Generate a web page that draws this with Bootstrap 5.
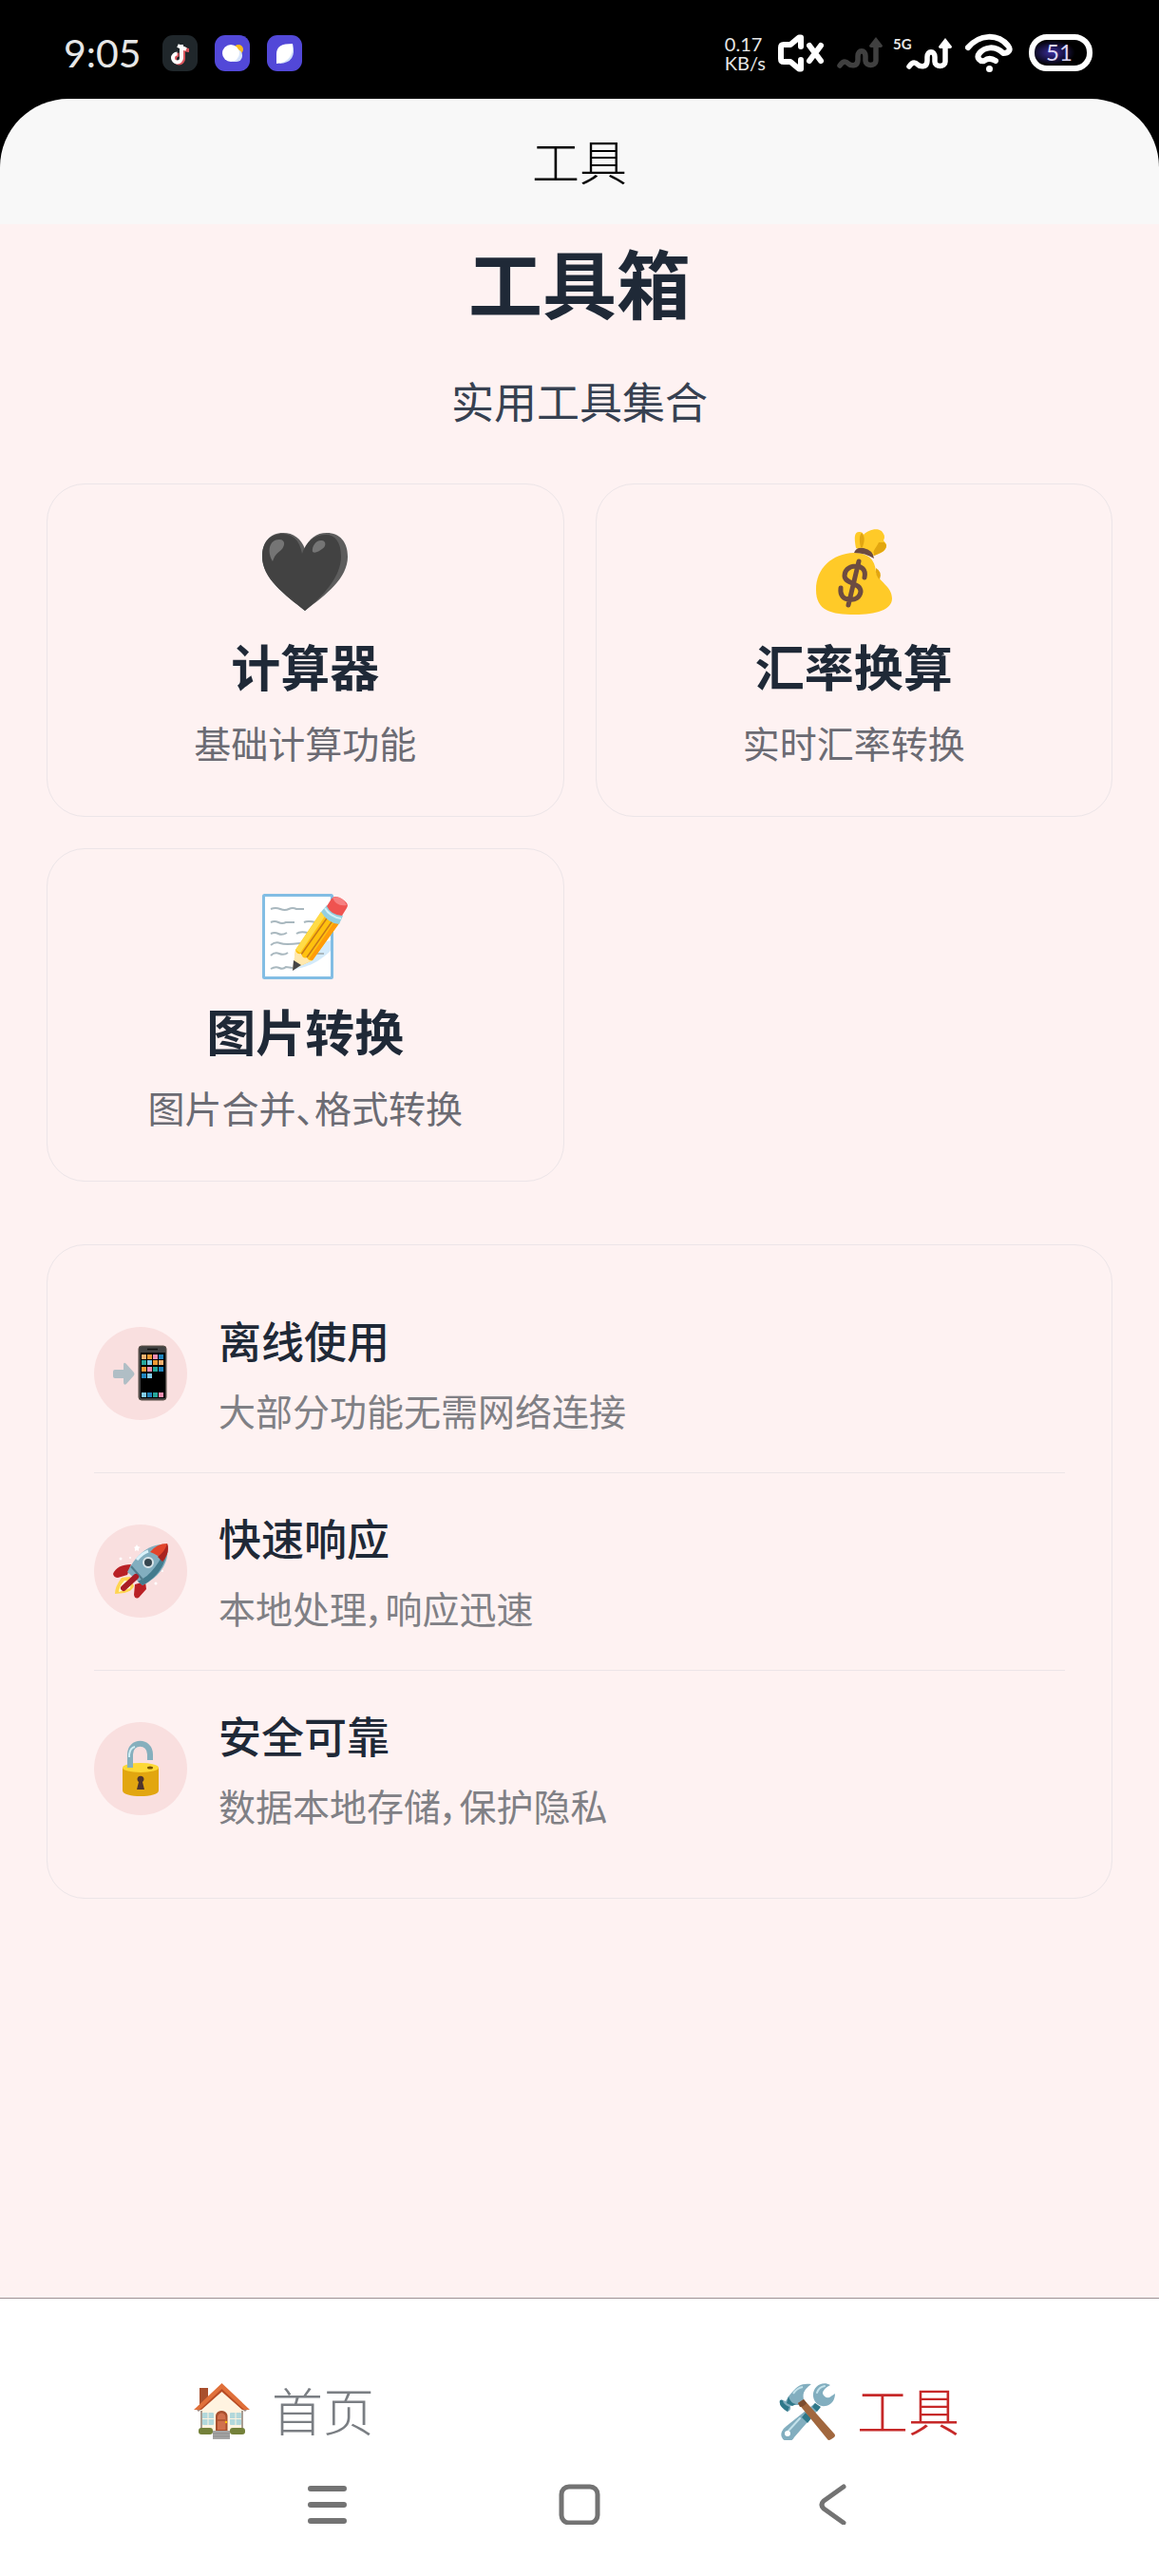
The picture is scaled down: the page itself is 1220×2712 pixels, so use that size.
<!DOCTYPE html>
<html lang="zh-CN">
<head>
<meta charset="utf-8">
<meta name="viewport" content="width=device-width, initial-scale=1">
<title>工具</title>
<link href="https://cdn.jsdelivr.net/npm/bootstrap@5.3.0/dist/css/bootstrap.min.css" rel="stylesheet">
<style>
  body { font-family: "Noto Sans CJK SC", sans-serif; background: #fef2f2; color: #1f2937; }
  svg { display: block; flex: none; }

  /* status bar */
  .statusbar { background: #000; font-family: Lato, sans-serif; color: #e6e6e6; height: 104px; padding: 8px 70px 0 67px; }
  .clock { font-size: 41px; line-height: 48px; }
  .app-icons { gap: 18px; margin-left: 22px; }
  .net-speed { font-size: 20px; line-height: 20px; }
  .status-icons { gap: 13px; }

  /* page header */
  .header-wrap { background: #000; }
  .page-header { background: #f8f8f8; border-radius: 72px 72px 0 0; height: 132px; padding-bottom: 4px; font-size: 50px; line-height: 72px; font-weight: 300; color: #000; }

  .page-main { padding: 12px 49px 48px; }
  .page-title { font-size: 78px; line-height: 96px; font-weight: 700; margin: 0; }
  .page-subtitle { font-size: 45px; line-height: 60px; color: #374151; margin: 48px 0 57px; }

  .tool-grid { --bs-gutter-x: 33px; --bs-gutter-y: 33px; }
  .tool-card, .feature-card { background: transparent; border: 1px solid #ece5e8; border-radius: 40px; }
  .tool-card { padding: 47px 24px 50px; color: #1f2937; }
  .tool-name { font-size: 52px; line-height: 72px; font-weight: 700; margin: 18px 0 16px; }
  .tool-desc { font-size: 39px; line-height: 56px; color: #6b6b73; margin: 0; }
  .tool-desc, .feature-desc { font-feature-settings: "palt"; }

  .feature-card { margin-top: 66px; padding: 32px 49px; }
  .feature-row { gap: 33px; padding: 36px 0 38px; border-bottom: 1px solid #ece5e8; }
  .feature-row:last-child { border-bottom: 0; }
  .feature-icon { width: 98px; height: 98px; background: #f9dfdf; flex: none; }
  .feature-name { font-size: 45px; line-height: 64px; font-weight: 500; margin: 0 0 13px; }
  .feature-desc { font-size: 39px; line-height: 56px; color: #808085; margin: 0; }

  .bottom-area { background: #fff; border-top: 1px solid #9c9094; padding: 80px 0 18px; }
  .tab-link { height: 78px; gap: 22px; font-size: 54px; line-height: 74px; font-weight: 300; color: #7a7e83; text-decoration: none; white-space: pre; }
  .tab-link span { padding-bottom: 4px; }
  .tab-link.active { color: #c62828; }
  .sysnav { height: 116px; gap: 178px; }
  .sysnav .btn { width: 88px; height: 88px; padding: 0; border: 0; }
</style>
</head>
<body class="d-flex flex-column min-vh-100">

<div class="statusbar d-flex justify-content-between align-items-center">
  <div class="d-flex align-items-center">
    <span class="clock">9:05</span>
    <div class="app-icons d-flex">
      <svg width="37" height="38" viewBox="0 0 37 38" aria-hidden="true"><rect width="37" height="38" rx="11" fill="#20272b"/><path d="M21 11v13a4.500 4.500 0 1 1-4.500-4.500M21 12q2 3 6 3" transform="translate(1 1)" fill="none" stroke="#d9545c" stroke-width="4"/><path d="M20 10v14a4.500 4.500 0 1 1-4.500-4.500M16 11l9 4" fill="none" stroke="#fff" stroke-width="4"/></svg>
      <svg width="37" height="38" viewBox="0 0 37 38" aria-hidden="true"><rect width="37" height="38" rx="11" fill="#5248d8"/><circle cx="25" cy="15" r="5" fill="#fbbc1c"/><rect x="14" y="15" width="15" height="13" rx="6" fill="#d7e4fb"/><circle cx="17" cy="19" r="9" fill="#fff"/></svg>
      <svg width="37" height="38" viewBox="0 0 37 38" aria-hidden="true"><rect width="37" height="38" rx="11" fill="#5248d8"/><path d="M27 9q5 20-14 21l14-16z" fill="#cfdff9"/><path d="M27 9C15 9 10 12 10 20v10C20 29 28 24 27 9z" fill="#fff"/></svg>
    </div>
  </div>
  <div class="status-icons d-flex align-items-center">
    <div class="net-speed"><div>0.17</div><div>KB/s</div></div>
    <svg width="49" height="40" viewBox="0 0 49 40" fill="none" stroke="#fff" stroke-width="6" stroke-linecap="round" stroke-linejoin="round" aria-hidden="true"><path d="M24 13V3.500h-2L13 11H6q-3 0-3 3v12q0 3 3 3h7l9 7.500h2V27M33 12l12 16M45 12L33 28"/></svg>
    <svg width="46" height="36" viewBox="0 0 46 36" overflow="visible" aria-hidden="true"><path d="M3 31c4-6 7-4 9-2s10 4 10-4v-4c0-7 8-7 8 0v5c0 6 11 6 11 0V10" fill="none" stroke="#404040" stroke-width="5.500" stroke-linecap="round"/><path d="M41 1l7 9q0 2-2 2H36q-2 0-2-2z" fill="#404040"/></svg>
    <svg width="63" height="38" viewBox="-2 0 63 38" aria-hidden="true"><text x="-2" y="15" font-family="Lato, sans-serif" font-size="15" font-weight="700" fill="#e6e6e6">5G</text><path d="M15 33c4-6 7-4 9-2s10 4 10-4v-4c0-7 8-7 8 0v5c0 6 11 6 11 0V12" fill="none" stroke="#fff" stroke-width="5.500" stroke-linecap="round"/><path d="M53 3l7 9q0 2-2 2H48q-2 0-2-2z" fill="#fff"/></svg>
    <svg width="50" height="42" viewBox="0 0 50 42" fill="none" stroke="#fff" stroke-width="6" stroke-linecap="round" stroke-linejoin="round" aria-hidden="true"><path d="M3 15C15 1 34 0 45 13c4 5 0 8-5 8C31 12 20 15 15 21c-4 5 1 9 5 8 5-4 9-2 12 0"/><circle cx="25.500" cy="37.500" r="3.500" fill="#fff" stroke="none"/></svg>
    <svg class="ms-1" width="67" height="40" viewBox="0 0 67 40" aria-hidden="true"><defs><radialGradient id="charge" cx="35%" cy="50%" r="40%"><stop offset="0" stop-color="#3a2d9c"/><stop offset="1" stop-color="#000"/></radialGradient></defs><rect x="3" y="3" width="61" height="33" rx="16" fill="url(#charge)" stroke="#fff" stroke-width="6"/><text x="32" y="28" text-anchor="middle" font-family="Lato, sans-serif" font-size="24" fill="#dcd6f6">51</text></svg>
  </div>
</div>

<div class="header-wrap">
  <header class="page-header d-flex align-items-center justify-content-center">工具</header>
</div>

<main class="page-main flex-grow-1">
  <h1 class="page-title text-center">工具箱</h1>
  <p class="page-subtitle text-center">实用工具集合</p>

  <div class="row row-cols-2 tool-grid">
    <div class="col">
      <a href="#calc" class="card tool-card align-items-center text-center text-decoration-none">
        <svg width="90" height="90" viewBox="0 0 90 90" aria-hidden="true"><path d="M45 21C41 10 33 4 22 4 8 4 0 14 0 29c0 23 24 40 45 57 22-17 45-34 45-57C90 14 82 4 68 4 57 4 49 10 45 21z" fill="#5d5d5d"/><path d="M42 26C39 11 32 5 21 5 8 5 0 14 0 29c0 23 24 40 45 57 19-15 38-36 38-57C83 14 77 6 67 6 55 6 46 13 42 26z" fill="#424242"/><path d="M11 34C5 24 7 11 18 11c7 0 6 7 2 11-5 4-7 6-9 12z" fill="#757575"/><path d="M53 24c-1-6 4-13 10-12 5 1 4 7 0 9-3 2-7 5-10 3z" fill="#757575"/></svg>
        <h2 class="tool-name">计算器</h2>
        <p class="tool-desc">基础计算功能</p>
      </a>
    </div>
    <div class="col">
      <a href="#rate" class="card tool-card align-items-center text-center text-decoration-none">
        <svg width="90" height="90" viewBox="0 0 90 90" aria-hidden="true"><path d="M47 20C45 10 45 2 51 3q3 0 4 3C60 0 73-3 76 5q2 3 0 7l3 4c1 7-7 10-14 12z" fill="#ffca28"/><path d="M66 26c-2-3 3-7 5-12h6l2 3c0 6-6 8-13 11zM52 19c-2-8-1-13 1-15 4 4 3 9 1 15z" fill="#e2a610"/><path d="M45 25c14 0 22 6 23 20 2 10 17 15 17 28 0 12-17 17-39 17C21 90 5 86 5 64 5 41 22 26 45 25z" fill="#ffca28"/><path d="M68 41q7 4 4 12-5-4-4-12z" fill="#e2a610"/><path d="M45 25q2-6 10-5 10 2 11 11-9-6-21-6z" fill="#6d4c41"/><path d="M56 51c2-9-4-12-9-12-8 0-12 5-12 10 0 9 17 7 17 17-1 6-6 9-12 8-6 0-10-4-9-12M50 34L39 80" fill="none" stroke="#6d4c41" stroke-width="5" stroke-linecap="round"/></svg>
        <h2 class="tool-name">汇率换算</h2>
        <p class="tool-desc">实时汇率转换</p>
      </a>
    </div>
    <div class="col">
      <a href="#image" class="card tool-card align-items-center text-center text-decoration-none">
        <svg width="90" height="90" viewBox="0 0 90 90" aria-hidden="true"><rect x="1.500" y="1.500" width="72" height="87" rx="1" fill="#fff" stroke="#82bde4" stroke-width="3"/><path d="M32 80l28-28 12-3v11C58 73 50 76 32 80z" fill="#d4ebfb"/><g fill="none" stroke="#a9b8bf" stroke-width="2"><path d="M9 16q5-2 10 0t9 0 8 0h8M9 30q4-2 8 0t8 0h9M44 30q4-2 12 0M9 42q4-2 8 0t9-1M36 42q4-3 12-1M9 54q5-4 10-2t21 0M9 65q4-4 9-2t9-1M57 63h8M9 79q5-3 9-1t7-1l7 1"/></g><path d="M35 59L62 19l19 12-28 39-11 5-8-4z" fill="#ffc10e"/><path d="M35 59l27-40 5 3-27 40z" fill="#ffdb47"/><path d="M49 69l28-41 4 3-28 39z" fill="#ff9c0a"/><path d="M41 64l29-41M47 67l28-40" stroke="#c87a19" stroke-width="1.500"/><path d="M35 59q1 5 6 4 2 6 6 4 2 4 6 3L32 80z" fill="#ffe8ad"/><path d="M33 70l8 5-9 6z" fill="#454545"/><path d="M62 19l6-7 17 11-4 9q-12-1-19-13z" fill="#93cfdf"/><path d="M66 15q5 9 17 11" fill="none" stroke="#d2f1f7" stroke-width="2"/><path d="M68 13l5-8q3-4 10 0c7 4 8 7 6 10l-5 8q-12-1-16-10z" fill="#ef5350"/><path d="M74 4q10-3 15 8-11 2-15-8z" fill="#f68081"/></svg>
        <h2 class="tool-name">图片转换</h2>
        <p class="tool-desc">图片合并、格式转换</p>
      </a>
    </div>
  </div>

  <section class="card feature-card">
    <div class="feature-row d-flex align-items-center">
      <div class="feature-icon rounded-circle d-flex align-items-center justify-content-center">
        <svg width="58" height="60" viewBox="0 0 58 60" aria-hidden="true"><path d="M11 26v-5q0-4 3-1l8 9q1 2 0 3l-8 9q-3 2-3-2v-4H2q-2 0-2-2v-5q0-2 2-2z" fill="#b0bec5"/><rect x="27" y="1" width="29" height="57" rx="3" fill="#424242" stroke="#5c5048"/><rect x="29" y="8" width="26" height="48" fill="#000"/><path d="M36 4.500h11" stroke="#111" stroke-width="1.500"/><g fill="#f4b070"><path d="M30 10h5v5h-5zM48 16h5v5h-5z"/></g><g fill="#f09a35"><path d="M36 10h5v5h-5zM42 16h5v5h-5zM30 23h5v5h-5z"/></g><g fill="#f48fb1"><path d="M42 10h5v5h-5zM36 23h5v5h-5zM48 50h5v5h-5z"/></g><g fill="#1f84bd"><path d="M48 10h5v5h-5zM48 23h5v5h-5zM30 30h5v5h-5zM36 50h5v5h-5z"/></g><g fill="#26a69a"><path d="M30 16h5v5h-5zM42 23h5v5h-5zM42 50h5v5h-5z"/></g><g fill="#81cbe9"><path d="M36 16h5v5h-5zM36 30h5v5h-5zM30 50h5v5h-5z"/></g></svg>
      </div>
      <div>
        <h3 class="feature-name">离线使用</h3>
        <p class="feature-desc">大部分功能无需网络连接</p>
      </div>
    </div>
    <div class="feature-row d-flex align-items-center">
      <div class="feature-icon rounded-circle d-flex align-items-center justify-content-center">
        <svg width="58" height="60" viewBox="0 0 58 60" aria-hidden="true"><path d="M9 37l9-1 4 10q-2 5-10 7l-10 1q0-8 7-17z" fill="#ffd54f"/><path d="M12 40l7 1-1 7-12 4q1-7 6-12z" fill="#fffde0"/><path d="M19 23Q4 23 0 33q1 4 5 4l10-3zM34 41l1 8-8 9q-4 2-5-3l1-11z" fill="#b92025"/><path d="M57 2c3 19-8 34-26 43L15 31C23 15 37 0 57 2z" fill="#82aebf"/><path d="M57 2c1 16-8 34-26 43l-5-4c14-6 24-21 31-39z" fill="#447b8d"/><path d="M19 25l13 15" stroke="#507c8c" stroke-width="2"/><path d="M25 18Q31 11 37 9" fill="none" stroke="#d9f2fa" stroke-width="3"/><path d="M57 1q3 10-5 19Q47 12 39 10 46 1 57 1z" fill="#e2452c"/><path d="M57 1q3 10-5 19l-5-5q8-6 10-14z" fill="#a92320"/><circle cx="37" cy="21" r="5" fill="#37474f" stroke="#d9e4e8" stroke-width="2"/><path d="M24 36L11 48" stroke="#a91d25" stroke-width="6" stroke-linecap="round"/><g fill="#fff"><path d="M25 2l1 2 3 1-2 1v3l-2-1-2 1v-3l-1-1 2-1z"/><circle cx="8" cy="17" r="1.500"/><circle cx="18" cy="16" r="1"/><circle cx="52" cy="30" r="1"/><circle cx="45" cy="43" r="1.500"/></g></svg>
      </div>
      <div>
        <h3 class="feature-name">快速响应</h3>
        <p class="feature-desc">本地处理，响应迅速</p>
      </div>
    </div>
    <div class="feature-row d-flex align-items-center">
      <div class="feature-icon rounded-circle d-flex align-items-center justify-content-center">
        <svg width="58" height="60" viewBox="0 0 58 60" aria-hidden="true"><path d="M10 29v24c0 8 38 8 38 0V29z" fill="#e2a610"/><ellipse cx="29" cy="29" rx="19" ry="5" fill="#fdd835"/><path d="M18 29V15c0-15 21-15 21 0v6" fill="none" stroke="#85afbd" stroke-width="6"/><path d="M17 18v-3q1-7 6-8" fill="none" stroke="#d0edf4" stroke-width="2"/><ellipse cx="39" cy="29" rx="3" ry="1.500" fill="#795508"/><path d="M27 44a3.500 3.500 0 1 1 4 0l2 8h-8z" fill="#4e342e"/></svg>
      </div>
      <div>
        <h3 class="feature-name">安全可靠</h3>
        <p class="feature-desc">数据本地存储，保护隐私</p>
      </div>
    </div>
  </section>
</main>

<footer class="bottom-area">
  <nav class="row row-cols-2 g-0">
    <a href="#home" class="col tab-link d-flex align-items-center justify-content-center"><svg width="60" height="60" viewBox="0 0 60 60" aria-hidden="true"><path d="M6 5h9v15l-9 8z" fill="#a84f2d"/><path d="M7 27L29.500 4 52 27v24H7z" fill="#fff3e0"/><path d="M8 29v20M51 29v20" stroke="#8d8178" stroke-width="1.500"/><path d="M4 29L29.500 6 55 29" fill="none" stroke="#a1887f" stroke-width="3"/><path d="M29.500 0L0 28h7L29.500 7 52 28h7z" fill="#e0703a"/><path d="M29.500 6L6 28h2L29.500 9 51 28h2z" fill="#b84c25"/><rect x="9" y="31" width="12" height="13" rx="1" fill="#b2d8db"/><rect x="38" y="31" width="12" height="13" rx="1" fill="#b2d8db"/><path d="M15 31v13M9 37.500h12M44 31v13M38 37.500h12" stroke="#fff3e0"/><path d="M23 51V35c0-8 12.500-8 12.500 0v16z" fill="#a84f2d"/><path d="M25 49V36c0-6 8.500-6 8.500 0v13z" fill="#d1704c"/><path d="M25 39h8" stroke="#a84f2d" stroke-width="1.500"/><circle cx="34" cy="41" r="1.200" fill="#ffc107"/><rect x="5" y="47" width="15" height="7" rx="3" fill="#74813a"/><rect x="38" y="47" width="16" height="7" rx="3" fill="#74813a"/><path d="M20 50h18v9H20z" fill="#a5a5a5"/><path d="M20 53h18M20 56h18" stroke="#8d8d8d"/></svg><span>首页&nbsp;</span></a>
    <a href="#tools" class="col tab-link active d-flex align-items-center justify-content-center" aria-current="page"><svg width="60" height="60" viewBox="0 0 60 60" aria-hidden="true"><path d="M38 21l5 5-27 31a7 7 0 0 1-13-6q1-3 5-6z" fill="#82aebf"/><path d="M38 21l6 4-4 5-5-5z" fill="#2f7889"/><path d="M24 36l6 6 4-5-6-6z" fill="#2f7889"/><path d="M54 2C45-3 35 4 36 14c1 7 7 11 13 10 6-1 10-6 10-13l-6 4q-5 1-7-4 0-5 8-9z" fill="#82aebf"/><path d="M40 10q2-6 8-7M10 50l12-13" fill="none" stroke="#c3e2eb" stroke-width="2" stroke-linecap="round"/><circle cx="9" cy="53" r="3" fill="#fff"/><path d="M34 1C25 0 20 1 10 14l-3 5-5-2q-4 6 7 13 4-1 3-6l4-1 5 0 5-6c-2-8 3-12 8-16z" fill="#82aebf"/><path d="M1 18q-2 6 8 12l2-5Q4 22 4 18zM10 14q2 7 8 8l-4 2-6-3z" fill="#2f7889"/><path d="M15 11q4-6 10-7" fill="none" stroke="#c3e2eb" stroke-width="2"/><path d="M20 21l6-4 32 36q2 2 0 4l-3 2q-3 2-4 0z" fill="#a1673e"/><path d="M20 21l6-4 3 4q-3 4-7 4z" fill="#7d4d30"/></svg><span>工具</span></a>
  </nav>
  <div class="sysnav d-flex align-items-center justify-content-center">
    <button type="button" class="btn d-flex align-items-center justify-content-center" aria-label="菜单"><svg width="44" height="44" viewBox="0 0 44 44" stroke="#737373" stroke-width="6" stroke-linecap="round" aria-hidden="true"><path d="M5 6h35M5 23h35M5 40h35"/></svg></button>
    <button type="button" class="btn d-flex align-items-center justify-content-center" aria-label="主屏幕"><svg width="44" height="44" viewBox="0 0 44 44" aria-hidden="true"><rect x="3" y="4" width="38" height="38" rx="8" fill="none" stroke="#737373" stroke-width="5"/></svg></button>
    <button type="button" class="btn d-flex align-items-center justify-content-center" aria-label="返回"><svg width="44" height="44" viewBox="0 0 44 44" aria-hidden="true"><path d="M34 4L13 19q-4 4 0 8l21 15" fill="none" stroke="#737373" stroke-width="5" stroke-linecap="round" stroke-linejoin="round"/></svg></button>
  </div>
</footer>

<script src="https://cdn.jsdelivr.net/npm/bootstrap@5.3.0/dist/js/bootstrap.bundle.min.js"></script>
</body>
</html>
